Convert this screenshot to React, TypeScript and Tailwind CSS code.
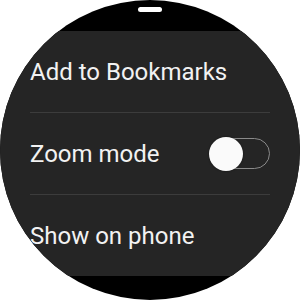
const Row = ({ label, children }: { label: string; children?: React.ReactNode }) => (
    <div className="flex h-[81px] items-center justify-between">
        <span className="text-[24px] leading-none text-[#f2f2f2]">{label}</span>
        {children}
    </div>
);

const Toggle = () => (
    <div className="relative h-[31px] w-[60px] rounded-full border-[1.5px] border-[#8a8a8a]">
        <div className="absolute left-[-2px] top-1/2 h-[34px] w-[34px] -translate-y-1/2 rounded-full bg-[#fafafa] shadow-[0_0_2px_rgba(0,0,0,0.6)]"></div>
    </div>
);

const App = () => {
    return (
        <div className="h-[300px] w-[300px] bg-white" style={{ fontFamily: 'Roboto, "Noto Sans", sans-serif' }}>
            <div className="flex h-[300px] w-[300px] flex-col overflow-hidden rounded-full bg-black">
                {/* top bezel with handle */}
                <div className="flex h-[31px] shrink-0 justify-center pt-[7px]">
                    <div className="h-[5px] w-[24px] rounded-full bg-white"></div>
                </div>

                {/* menu panel */}
                <div className="flex h-[245px] shrink-0 flex-col bg-[#252525] px-[30px]">
                    <Row label="Add to Bookmarks" />
                    <div className="h-px bg-[#3c3c3c]"></div>
                    <Row label="Zoom mode">
                        <Toggle />
                    </Row>
                    <div className="h-px bg-[#3c3c3c]"></div>
                    <Row label="Show on phone" />
                </div>
            </div>
        </div>
    );
};

export default App;
